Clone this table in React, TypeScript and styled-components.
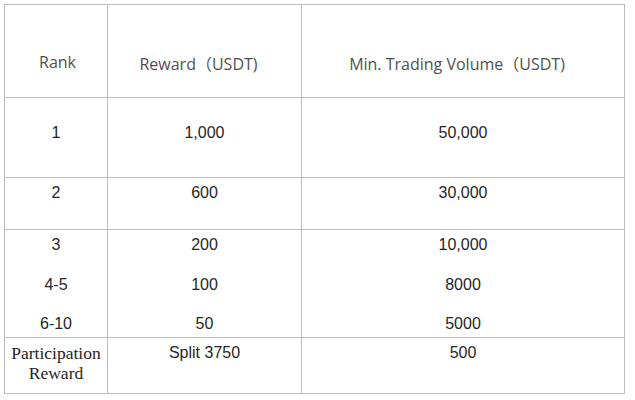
import React from "react";
import styled, { createGlobalStyle } from "styled-components";

const Global = createGlobalStyle`
  html, body { margin: 0; padding: 0; background: #ffffff; }
  body { width: 635px; height: 400px; overflow: hidden; }
`;

const Page = styled.div`
  padding: 4px 0 0 4px;
`;

const Table = styled.table`
  border-collapse: collapse;
  table-layout: fixed;
  width: 620px;
  border: 1px solid #bdbdbd;
`;

const Col = styled.col<{ $w: number }>`
  width: ${(p) => p.$w}px;
`;

const Row = styled.tr<{ $h: number }>`
  height: ${(p) => p.$h}px;
`;

const HeadCell = styled.th<{ $shift?: number; $right?: number; $left?: number }>`
  border: 1px solid #bdbdbd;
  padding: 0 ${(p) => p.$right ?? 0}px ${(p) => 22 + (p.$shift ?? 0)}px
    ${(p) => p.$left ?? 0}px;
  vertical-align: bottom;
  text-align: center;
  font-family: "Open Sans", "Noto Sans CJK SC", sans-serif;
  font-weight: 400;
  font-size: 16px;
  line-height: 22px;
  color: #505050;
`;

const Cell = styled.td<{ $top: number; $serif?: boolean }>`
  border: 1px solid #bdbdbd;
  padding: ${(p) => p.$top}px 0 0;
  vertical-align: top;
  text-align: center;
  font-family: ${(p) =>
    p.$serif ? `"Liberation Serif", serif` : `"Liberation Sans", Arial, sans-serif`};
  font-size: ${(p) => (p.$serif ? 17.5 : 16)}px;
  line-height: 20px;
  color: #262626;
`;

const Stack = styled.div`
  display: flex;
  flex-direction: column;
  gap: 19.5px;
`;

const Line = styled.div``;

const tiers = [
  { rank: ["3", "4-5", "6-10"], reward: ["200", "100", "50"], vol: ["10,000", "8000", "5000"] },
];

export default function App() {
  const t = tiers[0];
  return (
    <>
      <Global />
      <Page>
        <Table>
          <colgroup>
            <Col $w={103} />
            <Col $w={194} />
            <Col $w={323} />
          </colgroup>
          <thead>
            <Row $h={93}>
              <HeadCell $shift={2} $left={3}>Rank</HeadCell>
              <HeadCell $right={12}>Reward（USDT)</HeadCell>
              <HeadCell $right={12}>Min. Trading Volume（USDT)</HeadCell>
            </Row>
          </thead>
          <tbody>
            <Row $h={80}>
              <Cell $top={25}>1</Cell>
              <Cell $top={25}>1,000</Cell>
              <Cell $top={25}>50,000</Cell>
            </Row>
            <Row $h={52}>
              <Cell $top={5}>2</Cell>
              <Cell $top={5}>600</Cell>
              <Cell $top={5}>30,000</Cell>
            </Row>
            <Row $h={108}>
              {[t.rank, t.reward, t.vol].map((col, i) => (
                <Cell key={i} $top={5}>
                  <Stack>
                    {col.map((v) => (
                      <Line key={v}>{v}</Line>
                    ))}
                  </Stack>
                </Cell>
              ))}
            </Row>
            <Row $h={56}>
              <Cell $top={5} $serif>
                Participation
                <br />
                Reward
              </Cell>
              <Cell $top={5}>Split 3750</Cell>
              <Cell $top={5}>500</Cell>
            </Row>
          </tbody>
        </Table>
      </Page>
    </>
  );
}
